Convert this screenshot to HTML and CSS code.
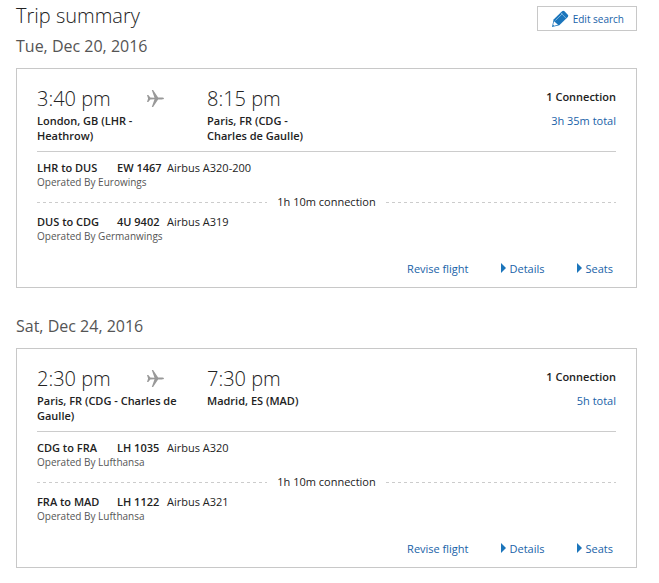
FILE: index.html
```html
<!DOCTYPE html>
<html lang="en">
  <head>
    <meta charset="utf-8" />
    <meta name="viewport" content="width=device-width, initial-scale=1" />
    <title>Trip summary</title>
    <link rel="stylesheet" href="styles.css">
  </head>
  <body>
    <!-- shared plane icon -->
    <svg class="sprite" width="0" height="0" aria-hidden="true">
      <symbol id="plane" viewBox="0 0 17 17">
        <path d="M0 5h1.300l2 2.600 4.200.1L4.800 0h1.300l5 7.600h3.700c1.200 0 2.200.4 2.200.9s-1 .9-2.200.9h-3.700L6.100 17H4.800l2.700-7.700-4.200.1-2 2.600H0l1.100-3.500z" />
      </symbol>
    </svg>

    <main class="page">
      <header class="page-header">
        <h1>Trip summary</h1>
        <button type="button" class="edit-button">
          <svg class="pencil" viewBox="0 0 17 17" aria-hidden="true">
            <path class="fill" d="M1.600 9.500L10.100 1.200q1.200-1 2.400.1l3.300 3.400q1 1.100 0 2.200L7.300 15.200 0 17z" />
            <path class="line" d="M8.600 2.600l5.700 5.900M3.400 10.500l7-6.800" />
            <path class="tip" d="M2 11.200l4 3.600-3.900.9-.9-.9z" />
          </svg>
          Edit search
        </button>
      </header>

      <section class="trip">
        <h2>Tue, Dec 20, 2016</h2>
        <div class="card">
          <div class="route">
            <div class="depart">
              <div class="time">3:40 pm <svg class="plane"><use href="#plane" /></svg></div>
              <div class="place">London, GB (LHR - Heathrow)</div>
            </div>
            <div class="arrive">
              <div class="time">8:15 pm</div>
              <div class="place">Paris, FR (CDG - Charles de Gaulle)</div>
            </div>
            <div class="total">
              <b>1 Connection</b>
              <a href="#">3h 35m total</a>
            </div>
          </div>
          <div class="flight">
            <div class="flight-info"><b class="leg">LHR to DUS</b><b class="number">EW 1467</b><span>Airbus A320-200</span></div>
            <div class="operator">Operated By Eurowings</div>
          </div>
          <div class="connection">1h 10m connection</div>
          <div class="flight">
            <div class="flight-info"><b class="leg">DUS to CDG</b><b class="number">4U 9402</b><span>Airbus A319</span></div>
            <div class="operator">Operated By Germanwings</div>
          </div>
          <div class="actions">
            <a href="#">Revise flight</a>
            <a href="#" class="toggle">Details</a>
            <a href="#" class="toggle">Seats</a>
          </div>
        </div>
      </section>

      <section class="trip">
        <h2>Sat, Dec 24, 2016</h2>
        <div class="card">
          <div class="route">
            <div class="depart">
              <div class="time">2:30 pm <svg class="plane"><use href="#plane" /></svg></div>
              <div class="place">Paris, FR (CDG - Charles de Gaulle)</div>
            </div>
            <div class="arrive">
              <div class="time">7:30 pm</div>
              <div class="place">Madrid, ES (MAD)</div>
            </div>
            <div class="total">
              <b>1 Connection</b>
              <a href="#">5h total</a>
            </div>
          </div>
          <div class="flight">
            <div class="flight-info"><b class="leg">CDG to FRA</b><b class="number">LH 1035</b><span>Airbus A320</span></div>
            <div class="operator">Operated By Lufthansa</div>
          </div>
          <div class="connection">1h 10m connection</div>
          <div class="flight">
            <div class="flight-info"><b class="leg">FRA to MAD</b><b class="number">LH 1122</b><span>Airbus A321</span></div>
            <div class="operator">Operated By Lufthansa</div>
          </div>
          <div class="actions">
            <a href="#">Revise flight</a>
            <a href="#" class="toggle">Details</a>
            <a href="#" class="toggle">Seats</a>
          </div>
        </div>
      </section>
    </main>
  </body>
</html>
```
FILE: styles.css
```css
* {
  box-sizing: border-box;
}

body {
  margin: 0;
  font-family: "Open Sans", Arial, sans-serif;
  font-size: 11px;
  line-height: 14px;
  color: #222;
  background-color: #fff;
}

b {
  font-weight: 600;
}

a {
  color: #1862a8;
  text-decoration: none;
}

a:hover {
  text-decoration: underline;
}

.sprite {
  display: block;
}

.page {
  padding: 0 22px 0 16px;
}

.page-header {
  display: flex;
  justify-content: space-between;
  align-items: flex-end;
  height: 31px;
}

h1 {
  margin: 0;
  font-size: 20px;
  font-weight: 300;
  line-height: 30px;
}

h2 {
  margin: 0;
  padding-top: 4px;
  font-size: 16px;
  font-weight: 400;
  line-height: 22px;
  color: #555;
}

.edit-button {
  display: flex;
  align-items: center;
  gap: 4px;
  height: 25px;
  padding: 0 12px 0 14px;
  border: 1px solid #c8c8c8;
  background: #fff;
  color: #1862a8;
  font-family: inherit;
  font-size: 10px;
  cursor: pointer;
}

.pencil {
  width: 17px;
  height: 17px;
}

.pencil .fill {
  fill: #1b75bb;
}

.pencil .line {
  fill: none;
  stroke: #8fc0e4;
  stroke-width: 0.8;
}

.pencil .tip {
  fill: #fff;
}

/* One card for each direction of the trip */
.card {
  margin: 11px 0 23px;
  padding: 15px 20px 11px;
  border: 1px solid #c8c8c8;
}

.route {
  display: flex;
  padding-bottom: 8px;
  border-bottom: 1px solid #ccc;
}

.depart {
  width: 145px;
  margin-right: 25px;
}

.arrive {
  width: 110px;
}

.time {
  display: flex;
  gap: 36px;
  align-items: center;
  font-size: 20px;
  font-weight: 300;
  line-height: 29px;
}

.plane {
  width: 17px;
  height: 17px;
  fill: #999;
}

.place {
  min-height: 30px;
  font-weight: 600;
  line-height: 15px;
}

.total {
  display: flex;
  flex-direction: column;
  gap: 10px;
  margin-left: auto;
  padding-top: 6px;
  text-align: right;
}

.flight {
  padding-top: 9px;
}

.flight-info {
  display: flex;
}

.leg {
  width: 80px;
}

.number {
  width: 50px;
}

.operator {
  font-size: 10px;
  color: #555;
}

/* Dashed line on both sides of the layover time */
.connection {
  display: flex;
  align-items: center;
  gap: 10px;
  margin: 6px 0 -3px;
}

.connection::before,
.connection::after {
  content: "";
  flex: 1;
  height: 1px;
  background: repeating-linear-gradient(to right, #ccc 0 3px, transparent 3px 6px);
}

.actions {
  display: flex;
  justify-content: flex-end;
  gap: 32px;
  padding: 19px 3px 0 0;
}

.toggle::before {
  content: "";
  display: inline-block;
  margin-right: 4px;
  border-left: 5px solid #1b75bb;
  border-top: 5px solid transparent;
  border-bottom: 5px solid transparent;
}
```
